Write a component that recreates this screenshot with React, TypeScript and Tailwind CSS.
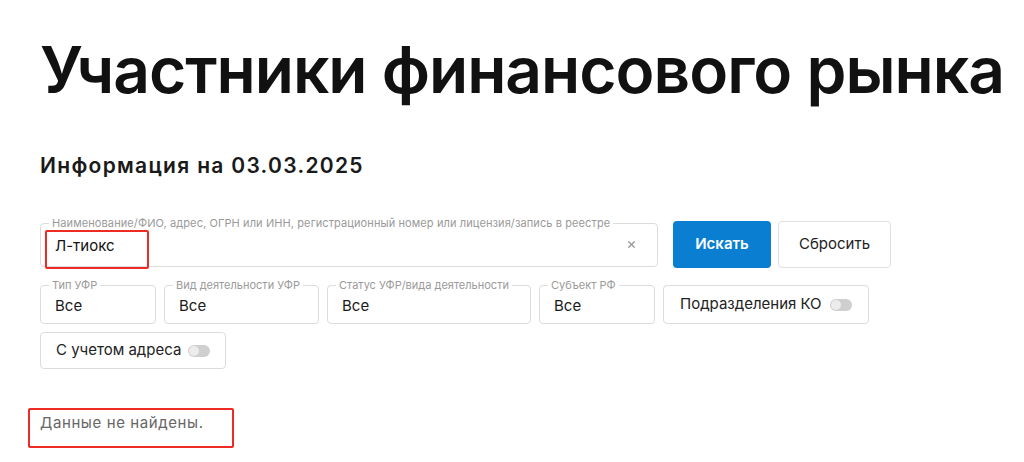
import { X } from "lucide-react";

function Toggle() {
  return (
    <span className="relative inline-block w-[22px] h-[12px] rounded-full bg-[#cfcfcf]">
      <span className="absolute left-[1px] top-[1px] w-[10px] h-[10px] rounded-full bg-[#ececec]"></span>
    </span>
  );
}

function SelectBox({ label, value, width }: { label: string; value: string; width: string }) {
  return (
    <div className={`relative h-[39px] rounded-[4px] border border-[#dcdcdc] flex items-center px-[14px] ${width}`}>
      <span className="absolute -top-[7px] left-[8px] px-[3px] bg-white text-[11px] leading-[13px] text-[#9a9a9a] whitespace-nowrap">
        {label}
      </span>
      <span className="text-[15px] text-[#1a1a1a] mt-[3px]">{value}</span>
    </div>
  );
}

export default function App() {
  return (
    <div className="min-h-[462px] bg-white px-[40px] pt-[28px] font-['Inter',sans-serif] relative overflow-hidden">
      <h1 className="text-[64px] leading-[84px] font-semibold tracking-[-1px] text-[#111] whitespace-nowrap">
        Участники финансового рынка
      </h1>

      <h2 className="mt-[41px] text-[21px] leading-[26px] font-semibold tracking-[1.3px] text-[#1a1a1a]">
        Информация на 03.03.2025
      </h2>

      {/* Search row */}
      <div className="mt-[42px] flex items-center">
        <div className="relative w-[618px] h-[44px] rounded-[4px] border border-[#dcdcdc] flex items-center px-[14px]">
          <span className="absolute -top-[7px] left-[8px] px-[3px] bg-white text-[11px] leading-[13px] tracking-[0.1px] text-[#9a9a9a] whitespace-nowrap">
            Наименование/ФИО, адрес, ОГРН или ИНН, регистрационный номер или лицензия/запись в реестре
          </span>
          <span className="flex-1 text-[15px] text-[#111] mt-[4px]">Л-тиокс</span>
          <X size={11} strokeWidth={3} className="text-[#9a9a9a] mr-[6px]" />
        </div>
        <button className="ml-[15px] w-[98px] h-[47px] rounded-[4px] bg-[#0a7fd2] text-white text-[15px] font-semibold">
          Искать
        </button>
        <button className="ml-[7px] w-[113px] h-[47px] rounded-[4px] border border-[#e0e0e0] bg-white text-[15px] text-[#222]">
          Сбросить
        </button>
      </div>

      {/* Filters */}
      <div className="mt-[17px] flex gap-[8px]">
        <SelectBox label="Тип УФР" value="Все" width="w-[116px]" />
        <SelectBox label="Вид деятельности УФР" value="Все" width="w-[155px]" />
        <SelectBox label="Статус УФР/вида деятельности" value="Все" width="w-[204px]" />
        <SelectBox label="Субъект РФ" value="Все" width="w-[116px]" />
        <div className="w-[206px] h-[39px] rounded-[4px] border border-[#dcdcdc] flex items-center justify-between px-[16px]">
          <span className="text-[15px] text-[#222]">Подразделения КО</span>
          <Toggle />
        </div>
      </div>
      <div className="mt-[8px] flex">
        <div className="w-[186px] h-[37px] rounded-[4px] border border-[#dcdcdc] flex items-center justify-between px-[15px]">
          <span className="text-[15px] text-[#222]">С учетом адреса</span>
          <Toggle />
        </div>
      </div>

      <p className="mt-[44px] text-[15px] leading-[20px] tracking-[0.6px] text-[#666]">Данные не найдены.</p>

      {/* annotation frames */}
      <div className="absolute left-[45px] top-[230px] w-[104px] h-[39px] border-2 border-[#ee2a24] rounded-[2px] pointer-events-none"></div>
      <div className="absolute left-[28px] top-[408px] w-[206px] h-[40px] border-2 border-[#ee2a24] rounded-[2px] pointer-events-none"></div>
    </div>
  );
}
